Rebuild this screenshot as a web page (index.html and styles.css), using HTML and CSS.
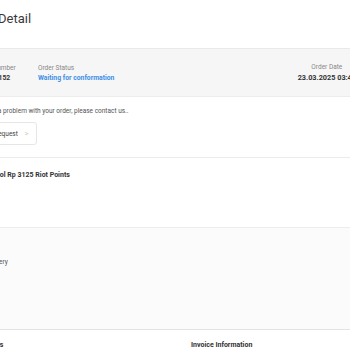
FILE: index.html
```html
<!DOCTYPE html>
<html>
<head>
<meta charset="utf-8">
<link rel="stylesheet" href="styles.css">
</head>
<body>
<div class="page">
  <header class="head">
    <h1 class="title">Order Detail</h1>
  </header>
  <section class="summary">
    <div class="col col-number">
      <div class="label">Order Number</div>
      <div class="value">#20258152</div>
    </div>
    <div class="col col-status">
      <div class="label">Order Status</div>
      <div class="value status">Waiting for conformation</div>
    </div>
    <div class="col col-date">
      <div class="label">Order Date</div>
      <div class="value date">23.03.2025 03:45</div>
    </div>
  </section>
  <section class="help">
    <p class="help-text">If you have a problem with your order, please contact us..</p>
    <button class="help-btn">Refund Request <span class="chev">&gt;</span></button>
  </section>
  <section class="product">
    <div class="product-name">Protocol Rp 3125 Riot Points</div>
  </section>
  <section class="delivery">
    <div class="delivery-label">Delivery</div>
  </section>
  <section class="info">
    <div class="info-col info-left">Payments</div>
    <div class="info-col info-right">Invoice Information</div>
  </section>
</div>
</body>
</html>
```

FILE: styles.css
```css
html, body {
  margin: 0;
  padding: 0;
  background: #ffffff;
  overflow: hidden;
}
.page {
  width: 430px;
  margin-left: -40px;
  font-family: Roboto, "Liberation Sans", sans-serif;
  color: #333;
}
.head {
  height: 48px;
  display: flex;
  align-items: center;
  padding-left: 3px;
}
.title {
  margin: -12px 0 0 0;
  font-size: 13px;
  font-weight: 400;
  color: #3a3a3a;
  line-height: 1;
}
.summary {
  height: 47px;
  background: #f6f6f6;
  border-top: 1px solid #e9e9e9;
  border-bottom: 1px solid #ececec;
  display: flex;
  align-items: center;
  padding-left: 15px;
}
.col {
  display: flex;
  flex-direction: column;
  gap: 2px;
}
.col-number { width: 63px; }
.col-status { flex: 1; }
.col-date { align-items: center; margin-right: 34px; }
.label {
  font-size: 6.5px;
  color: #888;
}
.value {
  font-size: 6.8px;
  font-weight: 700;
  color: #333;
}
.date { font-size: 7.3px; }
.status { color: #3d8fe6; }
.help {
  height: 60px;
  padding-left: 5px;
  border-bottom: 1px solid #ececec;
  display: flex;
  flex-direction: column;
  align-items: flex-start;
}
.help-text {
  margin: 10px 0 0 0;
  font-size: 6.5px;
  color: #555;
}
.help-btn {
  margin-top: 7px;
  height: 23px;
  padding: 0 7px 0 6px;
  border: 1px solid #e6e6e6;
  border-radius: 3px;
  background: #fff;
  font-family: Roboto, "Liberation Sans", sans-serif;
  font-size: 6.5px;
  color: #444;
  display: flex;
  align-items: center;
  gap: 7px;
}
.chev { color: #c8c8c8; font-size: 7px; }
.product {
  border-bottom: 1px solid #ececec;
  padding-left: 19px;
  padding-top: 13px;
  box-sizing: border-box;
  height: 70px;
}
.product-name {
  font-size: 7px;
  font-weight: 700;
  color: #333;
}
.delivery {
  height: 102px;
  background: #fbfbfb;
  border-bottom: 1px solid #e4e4e4;
  padding-left: 25px;
  padding-top: 30px;
  box-sizing: border-box;
}
.delivery-label {
  font-size: 6.5px;
  color: #555;
}
.info {
  display: flex;
  padding-top: 11px;
}
.info-col {
  font-size: 7px;
  font-weight: 700;
  color: #333;
}
.info-left { width: 219px; padding-left: 12px; }
```
